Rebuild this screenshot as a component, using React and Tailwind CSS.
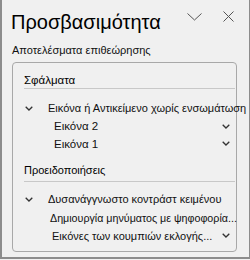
import React from "react";

function Chevron({ className = "" }) {
  return (
    <svg width="8" height="5" viewBox="0 0 8 5" className={className}>
      <path d="M0.7 0.7 L4 4 L7.3 0.7" fill="none" stroke="#333" strokeWidth="1.3" />
    </svg>
  );
}

const font = { fontFamily: '"Liberation Sans", Arial, sans-serif' };

function IssueRow({ label, indent = "", height, chevronLeft, chevronRight, size = "text-[11px]" }) {
  return (
    <div className={`flex items-center ${height}`}>
      {chevronLeft && (
        <div className="w-[35px] shrink-0 flex justify-start pl-[12px]">
          <Chevron />
        </div>
      )}
      <div className={`${indent} ${size} leading-[14px] text-[#111] whitespace-nowrap`}>{label}</div>
      {chevronRight && (
        <div className="ml-auto pr-[6px] flex items-center">
          <Chevron />
        </div>
      )}
    </div>
  );
}

export default function App() {
  return (
    <div className="w-[250px] h-[260px] bg-[#f0f0f0]" style={font}>
      <div className="h-[259px] border-l-2 border-r border-b-2 border-[#8c8c8c] flex flex-col">
        <div className="h-[40px] flex items-start">
          <div className="pl-[9px] pt-[8px] text-[20px] leading-[28px] text-black">
            Προσβασιμότητα
          </div>
          <div className="ml-auto flex items-center gap-[21px] pt-[11px] pr-[15px]">
            <svg width="15" height="8" viewBox="0 0 15 8">
              <path d="M0.5 0.5 L7.5 7 L14.5 0.5" fill="none" stroke="#555" strokeWidth="1" />
            </svg>
            <svg width="11" height="11" viewBox="0 0 11 11">
              <path d="M0.5 0.5 L10.5 10.5 M10.5 0.5 L0.5 10.5" fill="none" stroke="#555" strokeWidth="1" />
            </svg>
          </div>
        </div>
        <div className="h-[20px] pl-[10px] text-[11px] leading-[20px] text-[#111]">
          Αποτελέσματα επιθεώρησης
        </div>
        <div className="mt-[2px] ml-[10px] w-[225px] h-[190px] border border-[#a8a8a8] rounded-[4px] flex flex-col">
          <div className="h-[25px] pt-[10px] pl-[11px] text-[11.5px] leading-[14px] text-black">Σφάλματα</div>
          <div className="h-px bg-[#c8c8c8] ml-[11px] mr-[1px]" />
          <div className="pt-[10px]" />
          <IssueRow chevronLeft label="Εικόνα ή Αντικείμενο χωρίς ενσωμάτωση" height="h-[18px]" />
          <IssueRow label="Εικόνα 2" indent="pl-[41px]" size="text-[11.5px]" height="h-[18px]" chevronRight />
          <IssueRow label="Εικόνα 1" indent="pl-[41px]" size="text-[11.5px]" height="h-[17px]" chevronRight />
          <div className="h-[29px] pt-[11px] pl-[11px] text-[11px] leading-[14px] text-black">Προειδοποιήσεις</div>
          <div className="h-px bg-[#c8c8c8] ml-[11px] mr-[1px]" />
          <div className="pt-[8px]" />
          <IssueRow chevronLeft label="Δυσανάγγνωστο κοντράστ κειμένου" height="h-[18px]" />
          <IssueRow label="Δημιουργία μηνύματος με ψηφοφορία..." indent="pl-[37px]" size="text-[10.7px]" height="h-[19px]" />
          <IssueRow label="Εικόνες των κουμπιών εκλογής..." indent="pl-[39px]" height="h-[17px]" chevronRight />
        </div>
      </div>
    </div>
  );
}
